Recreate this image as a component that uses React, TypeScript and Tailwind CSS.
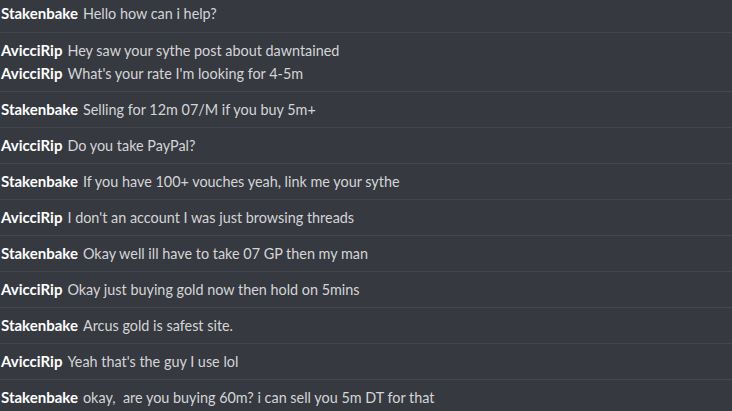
const rows: { author: string; lines: string[] }[] = [
  { author: "Stakenbake", lines: ["Hello how can i help?"] },
  {
    author: "AvicciRip",
    lines: ["Hey saw your sythe post about dawntained", "What's your rate I'm looking for 4-5m"],
  },
  { author: "Stakenbake", lines: ["Selling for 12m 07/M if you buy 5m+"] },
  { author: "AvicciRip", lines: ["Do you take PayPal?"] },
  { author: "Stakenbake", lines: ["If you have 100+ vouches yeah, link me your sythe"] },
  { author: "AvicciRip", lines: ["I don't an account I was just browsing threads"] },
  { author: "Stakenbake", lines: ["Okay well ill have to take 07 GP then my man"] },
  { author: "AvicciRip", lines: ["Okay just buying gold now then hold on 5mins"] },
  { author: "Stakenbake", lines: ["Arcus gold is safest site."] },
  { author: "AvicciRip", lines: ["Yeah that's the guy I use lol"] },
  { author: "Stakenbake", lines: ["okay,\u00a0 are you buying 60m? i can sell you 5m DT for that"] },
];

export default function App() {
  return (
    <div
      className="w-[732px] h-[411px] overflow-hidden bg-[#36393f]"
      style={{ fontFamily: "Lato, 'Noto Sans', sans-serif" }}
    >
      {rows.map((row, i) => (
        <div
          key={i}
          className={
            i === 0
              ? "pt-[2px] pb-[7px] pl-px border-b border-[#42454b]"
              : "py-[6px] pl-px border-b border-[#42454b]"
          }
        >
          {row.lines.map((line, j) => (
            <div key={j} className="flex items-baseline h-[23px] whitespace-nowrap">
              <span className="text-[15px] leading-[23px] font-bold text-white">{row.author}</span>
              <span className="ml-[5px] text-[14.4px] leading-[23px] text-[#d4d5d7]">{line}</span>
            </div>
          ))}
        </div>
      ))}
    </div>
  );
}
